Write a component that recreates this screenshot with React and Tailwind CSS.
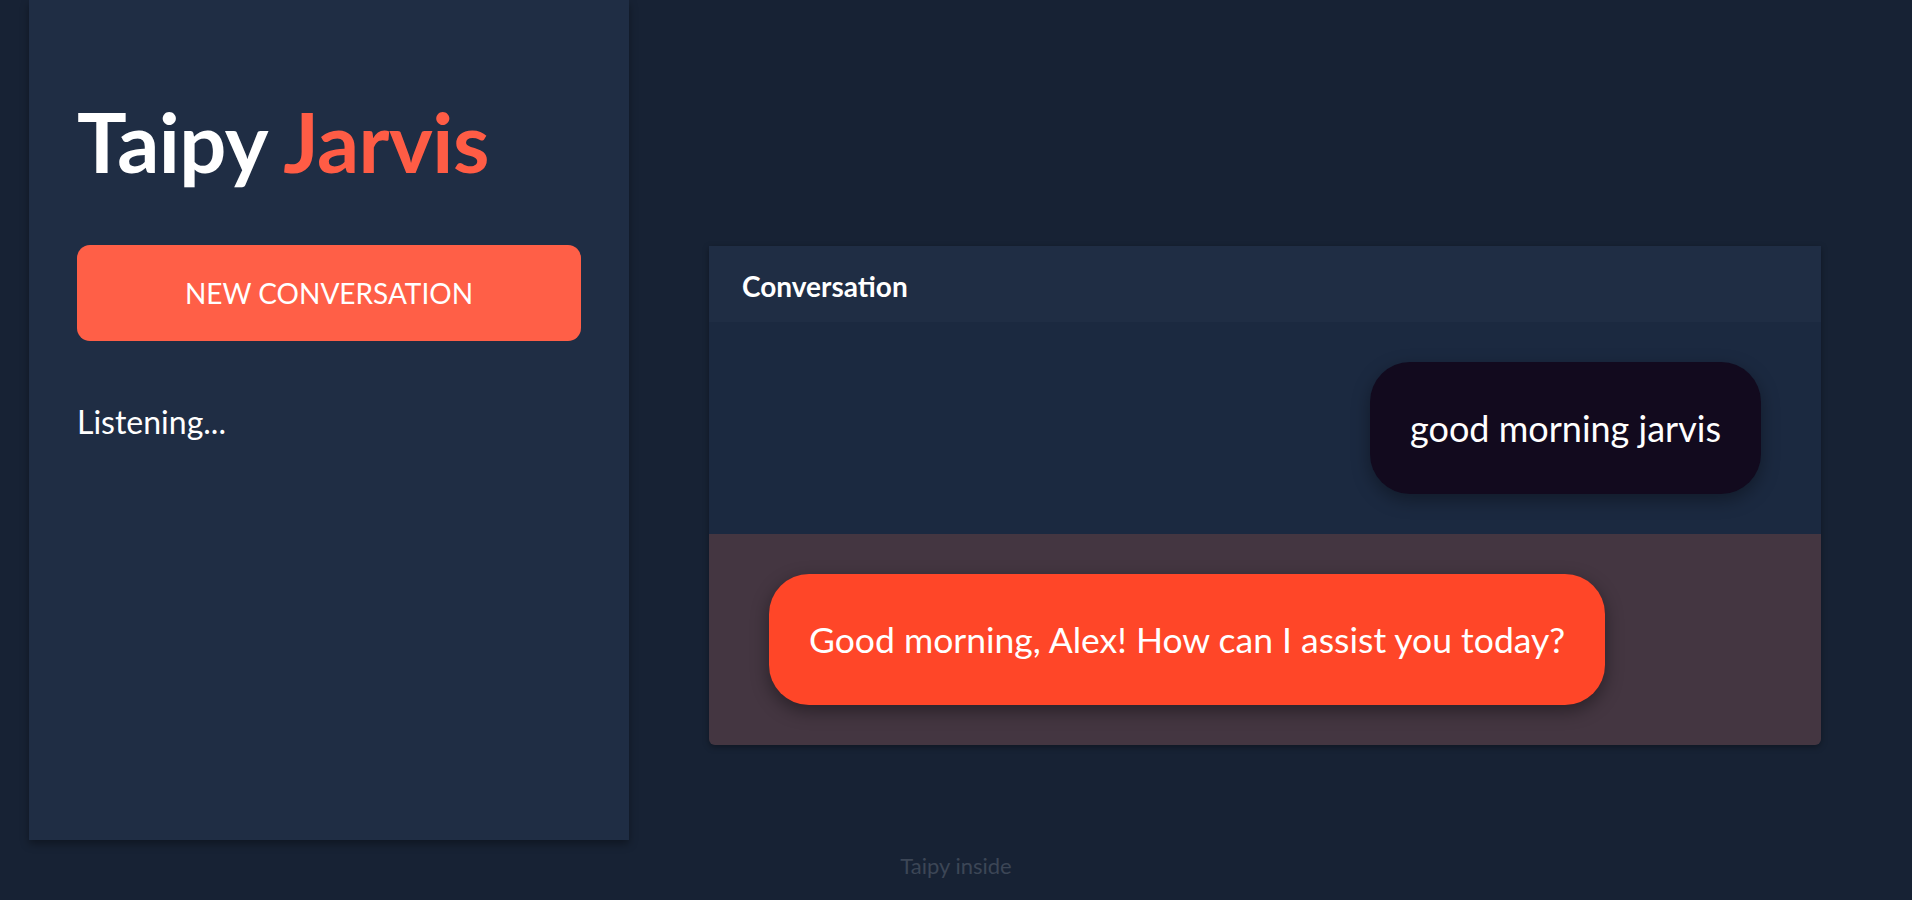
import React from "react";

const lato = { fontFamily: "Lato, 'Open Sans', sans-serif" };

function Sidebar() {
  return (
    <aside className="w-[600px] h-[840px] shrink-0 bg-[#1f2d44] px-12 pt-[100px] shadow-[0_4px_8px_rgba(0,0,0,0.35)]">
      <h1 className="text-[83px] font-bold leading-none text-white tracking-[-0.5px]">
        Taipy <span className="text-[#ff5c45]">Jarvis</span>
      </h1>
      <button className="mt-[62px] w-full h-[96px] rounded-[13px] bg-[#ff5f47] text-white text-[28px] uppercase">
        New Conversation
      </button>
      <p className="mt-[57px] text-[32px] text-white">Listening...</p>
    </aside>
  );
}

function Conversation() {
  return (
    <div className="self-start w-[1112px] mt-[246px] ml-[80px] rounded-b-[6px] overflow-hidden shadow-[0_2px_6px_rgba(0,0,0,0.35)]">
      <div className="h-[76px] bg-[#1f2d44] px-[33px] pt-[3px] flex items-center">
        <span className="text-[28px] font-bold text-white">Conversation</span>
      </div>
      <div className="h-[212px] bg-[#1b2940] flex justify-end items-center pr-[60px]">
        <div className="h-[132px] px-10 flex items-center rounded-[40px] bg-[#120a1e] text-white text-[36px] shadow-[0_6px_18px_rgba(0,0,0,0.35)]">
          good morning jarvis
        </div>
      </div>
      <div className="h-[211px] bg-[#443641] flex items-center pl-[60px]">
        <div className="h-[131px] px-10 flex items-center rounded-[40px] bg-[#ff4628] text-white text-[35.5px] shadow-[0_6px_18px_rgba(0,0,0,0.4)]">
          Good morning, Alex! How can I assist you today?
        </div>
      </div>
    </div>
  );
}

export default function App() {
  return (
    <div className="min-h-screen bg-[#172234] flex flex-col" style={lato}>
      <div className="flex pl-[29px]">
        <Sidebar />
        <Conversation />
      </div>
      <footer className="text-center text-[22px] text-[#3c4656] mt-[9px]">Taipy inside</footer>
    </div>
  );
}
